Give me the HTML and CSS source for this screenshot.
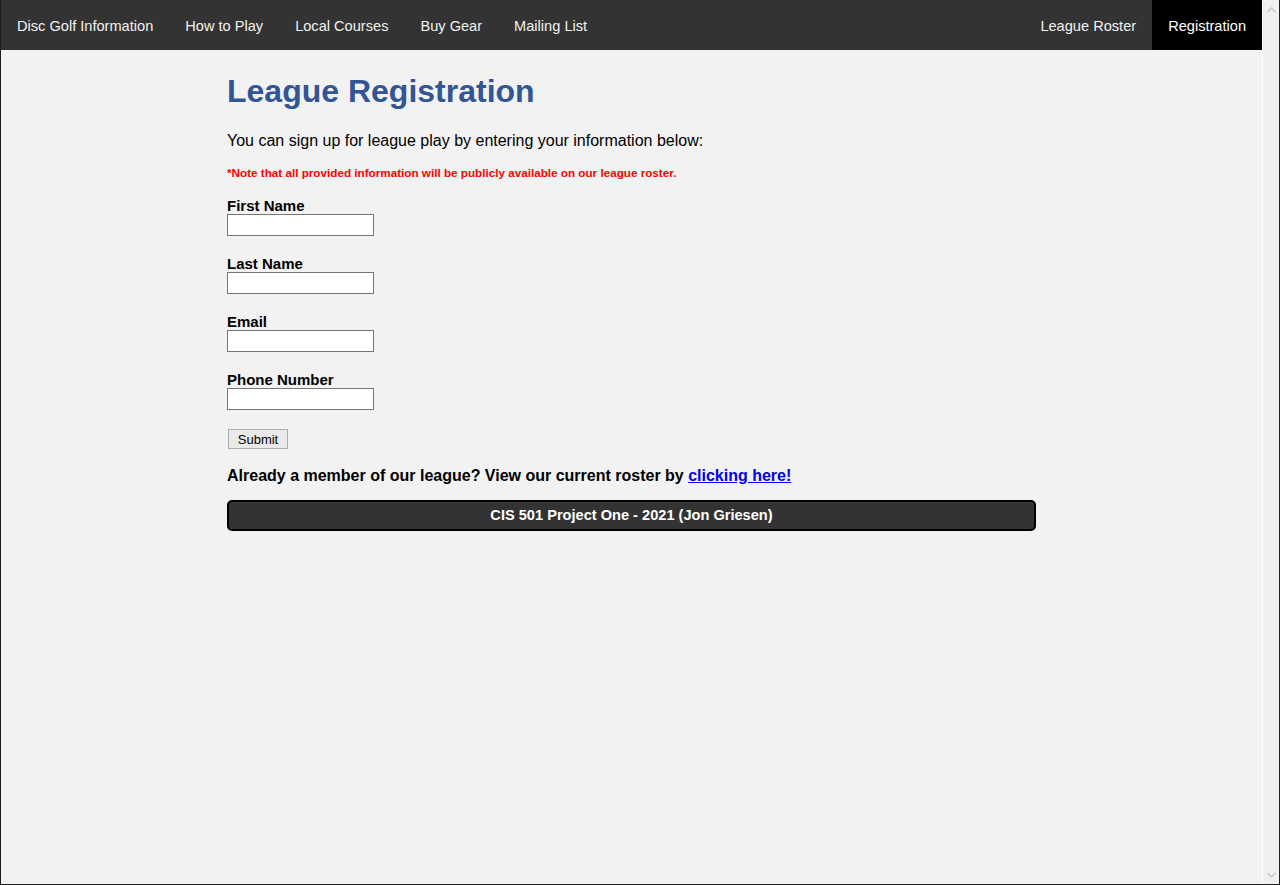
FILE: index.html
```html
<!DOCTYPE html>
<html lang="en">
<head>
<meta charset="utf-8">
<title>League Registration</title>
<link rel="stylesheet" href="styles.css">
</head>
<body>
<div class="window">
  <div class="viewport">
    <nav class="topnav">
      <div class="nav-left">
        <a class="nav-link" href="#">Disc Golf Information</a>
        <a class="nav-link" href="#">How to Play</a>
        <a class="nav-link" href="#">Local Courses</a>
        <a class="nav-link" href="#">Buy Gear</a>
        <a class="nav-link" href="#">Mailing List</a>
      </div>
      <div class="nav-right">
        <a class="nav-link" href="#">League Roster</a>
        <a class="nav-link active" href="#">Registration</a>
      </div>
    </nav>
    <main class="content">
      <h1 class="title">League Registration</h1>
      <p class="intro">You can sign up for league play by entering your information below:</p>
      <p class="note">*Note that all provided information will be publicly available on our league roster.</p>
      <form class="reg-form">
        <label class="field-label" for="fname">First Name</label>
        <input class="field-input" type="text" id="fname">
        <label class="field-label" for="lname">Last Name</label>
        <input class="field-input" type="text" id="lname">
        <label class="field-label" for="email">Email</label>
        <input class="field-input" type="text" id="email">
        <label class="field-label" for="phone">Phone Number</label>
        <input class="field-input" type="text" id="phone">
        <button class="submit-btn" type="button">Submit</button>
      </form>
      <p class="member">Already a member of our league? View our current roster by <a class="roster-link" href="#">clicking here!</a></p>
      <footer class="footer">CIS 501 Project One - 2021 (Jon Griesen)</footer>
    </main>
  </div>
  <div class="scrollbar">
    <svg class="arrow" width="9" height="6" viewBox="0 0 9 6"><path d="M0.5 5 L4.5 1 L8.5 5" fill="none" stroke="#c6c6c6" stroke-width="1.5"/></svg>
    <svg class="arrow" width="9" height="6" viewBox="0 0 9 6"><path d="M0.5 1 L4.5 5 L8.5 1" fill="none" stroke="#c6c6c6" stroke-width="1.5"/></svg>
  </div>
</div>
</body>
</html>
```
FILE: styles.css
```css
html, body {
  margin: 0;
  padding: 0;
}
body {
  font-family: Arial, "Liberation Sans", sans-serif;
  background: #1e1e1e;
}
.window {
  display: flex;
  height: 884px;
  border-left: 1px solid #1e1e1e;
  border-bottom: 1px solid #1e1e1e;
  background: #f2f2f2;
}
.viewport {
  flex: 1;
  display: flex;
  flex-direction: column;
  background: #f2f2f2;
}
.topnav {
  display: flex;
  justify-content: space-between;
  background: #333333;
  height: 50px;
}
.nav-left, .nav-right {
  display: flex;
}
.nav-link {
  display: block;
  color: #f2f2f2;
  text-decoration: none;
  font-size: 14.6px;
  line-height: 48px;
  padding: 2px 16px 0;
}
.nav-link.active {
  background: #000000;
  color: #ffffff;
}
.content {
  width: 809px;
  margin: 0 auto;
}
.title {
  color: #325694;
  font-size: 32px;
  font-weight: bold;
  margin: 23px 0 22px;
  line-height: 37px;
}
.intro {
  font-size: 16px;
  color: #000;
  margin: 0;
  line-height: 18px;
}
.note {
  color: #ff0000;
  font-weight: bold;
  font-size: 11.7px;
  line-height: 14px;
  margin: 16px 0 17px;
}
.reg-form {
  display: flex;
  flex-direction: column;
  align-items: flex-start;
}
.field-label {
  font-size: 15px;
  font-weight: bold;
  line-height: 17px;
  color: #000;
}
.field-input {
  box-sizing: border-box;
  width: 147px;
  height: 22px;
  margin: 0 0 19px;
  border: 1px solid #767676;
  background: #fff;
  padding: 1px 2px;
}
.submit-btn {
  box-sizing: border-box;
  width: 60px;
  height: 20px;
  margin: 0 0 0 1px;
  padding: 0;
  font-family: Arial, "Liberation Sans", sans-serif;
  font-size: 13px;
  color: #000;
  background: #e9e9e9;
  border: 1px solid #adadad;
  border-radius: 0;
}
.member {
  font-size: 16px;
  font-weight: bold;
  line-height: 18px;
  margin: 18px 0 15px;
  color: #000;
}
.roster-link {
  color: #0000ee;
  text-decoration: underline;
}
.footer {
  box-sizing: border-box;
  height: 31px;
  background: #333333;
  border: 2px solid #000;
  border-radius: 5px;
  color: #fff;
  font-weight: bold;
  font-size: 14.6px;
  line-height: 27px;
  text-align: center;
}
.scrollbar {
  box-sizing: border-box;
  width: 18px;
  border-left: 1px solid #ffffff;
  border-right: 1px solid #1e1e1e;
  background: #f0f0f0;
  display: flex;
  flex-direction: column;
  justify-content: space-between;
  align-items: center;
  padding: 7px 0 6px;
}
.arrow {
  display: block;
}
```
